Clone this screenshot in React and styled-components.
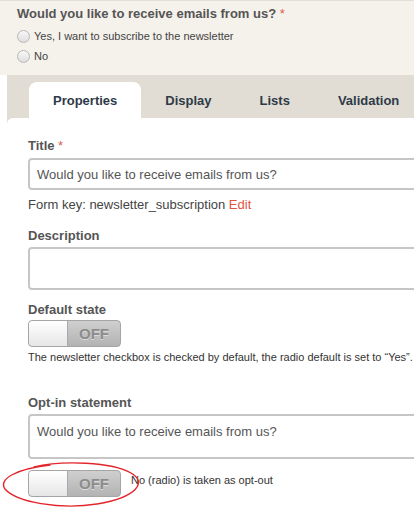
import styled, { createGlobalStyle } from "styled-components";

const GlobalStyle = createGlobalStyle`
  html, body {
    margin: 0;
    padding: 0;
    background: #fff;
    font-family: "Liberation Sans", Arial, sans-serif;
    overflow: hidden;
  }
`;

const tabs = ["Properties", "Display", "Lists", "Validation"];

const App = () => {
  return (
    <Page>
      <GlobalStyle />
      <Preview>
        <PreviewTitle>
          Would you like to receive emails from us? <Req>*</Req>
        </PreviewTitle>
        <RadioRow>
          <Radio />
          Yes, I want to subscribe to the newsletter
        </RadioRow>
        <RadioRow>
          <Radio />
          No
        </RadioRow>
      </Preview>
      <Editor>
        <TabBar>
          {tabs.map((t, i) => (
            <Tab key={t} $active={i === 0}>
              {t}
            </Tab>
          ))}
        </TabBar>
        <Panel>
          <Label>
            Title <Req>*</Req>
          </Label>
          <TextInput>Would you like to receive emails from us?</TextInput>
          <FormKey>
            Form key: newsletter_subscription <EditLink>Edit</EditLink>
          </FormKey>

          <Label $gap={15}>Description</Label>
          <TextArea $h={43} />

          <Label $gap={12}>Default state</Label>
          <Toggle $gap={2}>
            <Knob />
            <ToggleText>OFF</ToggleText>
          </Toggle>
          <Help>
            The newsletter checkbox is checked by default, the radio default is
            set to “Yes”.
          </Help>

          <Label $gap={31}>Opt-in statement</Label>
          <TextArea $h={45}>Would you like to receive emails from us?</TextArea>
          <ToggleRow>
            <Toggle>
              <Knob />
              <ToggleText>OFF</ToggleText>
            </Toggle>
            <HelpInline>No (radio) is taken as opt-out</HelpInline>
            <Circle width="146" height="50" viewBox="0 0 146 50">
              <path
                d="M 34 6 C 62 -1, 112 1, 131 12 C 147 21, 138 36, 97 43 C 60 49, 16 41, 5 28 C -2 18, 16 8, 50 4"
                fill="none"
                stroke="#e3262b"
                strokeWidth="1.4"
                strokeLinecap="round"
              />
            </Circle>
          </ToggleRow>
        </Panel>
      </Editor>
    </Page>
  );
};
export default App;

const Page = styled.div`
  width: 414px;
  height: 512px;
  overflow: hidden;
  color: #555;
`;
const Preview = styled.div`
  height: 75px;
  box-sizing: border-box;
  background: #f5f1eb;
  border-top: 1px solid #e4dfd7;
  padding: 5px 17px 0;
`;
const PreviewTitle = styled.div`
  font-size: 13px;
  font-weight: bold;
  line-height: 16px;
  color: #555;
  margin-bottom: 4px;
`;
const Req = styled.span`
  color: #e0604f;
  font-weight: normal;
`;
const RadioRow = styled.div`
  display: flex;
  align-items: center;
  gap: 4px;
  font-size: 11px;
  line-height: 20px;
  color: #444;
`;
const Radio = styled.span`
  width: 11px;
  height: 11px;
  border-radius: 50%;
  border: 1px solid #b8b8b8;
  background: linear-gradient(#f8f8f8, #dedede);
`;
const Editor = styled.div`
  margin-left: 7px;
  background: #e1ddd4;
`;
const TabBar = styled.div`
  display: flex;
  padding: 7px 0 0 22px;
  height: 43px;
  box-sizing: border-box;
`;
const Tab = styled.div`
  padding: 0 24px;
  height: 36px;
  display: flex;
  align-items: center;
  font-size: 13px;
  font-weight: bold;
  color: #2f3a48;
  border-radius: 8px 8px 0 0;
  background: ${(p) => (p.$active ? "#fff" : "transparent")};
  white-space: nowrap;
`;
const Panel = styled.div`
  position: relative;
  background: #fff;
  border-top-left-radius: 6px;
  padding: 20px 0 40px 21px;
`;
const Label = styled.div`
  font-size: 13px;
  font-weight: bold;
  line-height: 16px;
  color: #555;
  margin-top: ${(p) => p.$gap || 0}px;
`;
const TextInput = styled.div`
  margin-top: 4px;
  width: 400px;
  height: 32px;
  box-sizing: border-box;
  border: 2px solid #c6c6c6;
  border-radius: 4px;
  padding: 0 7px;
  display: flex;
  align-items: center;
  font-size: 13px;
  color: #555;
`;
const TextArea = styled.div`
  margin-top: 3px;
  width: 400px;
  height: ${(p) => p.$h}px;
  box-sizing: border-box;
  border: 2px solid #c6c6c6;
  border-radius: 4px;
  padding: 8px 7px;
  font-size: 13px;
  line-height: 16px;
  color: #555;
`;
const FormKey = styled.div`
  margin-top: 7px;
  font-size: 13px;
  line-height: 16px;
  color: #444;
`;
const EditLink = styled.span`
  color: #e0533f;
`;
const Toggle = styled.div`
  margin-top: ${(p) => p.$gap || 0}px;
  width: 93px;
  height: 27px;
  box-sizing: border-box;
  border: 1px solid #a5a5a5;
  border-radius: 4px;
  display: flex;
  overflow: hidden;
  background: linear-gradient(#cfcfcf, #b3b3b3);
  flex-shrink: 0;
`;
const Knob = styled.div`
  width: 38px;
  height: 100%;
  background: linear-gradient(#ffffff, #e6e6e6);
  border-right: 1px solid #a9a9a9;
  border-radius: 3px 0 0 3px;
`;
const ToggleText = styled.div`
  flex: 1;
  display: flex;
  align-items: center;
  justify-content: center;
  font-size: 15px;
  font-weight: bold;
  color: #8c8c8c;
  text-shadow: 0 1px 0 #dcdcdc;
`;
const Help = styled.div`
  margin-top: 4px;
  font-size: 11px;
  line-height: 13px;
  color: #333;
  white-space: nowrap;
`;
const ToggleRow = styled.div`
  position: relative;
  margin-top: 11px;
  display: flex;
  align-items: center;
  gap: 10px;
`;
const HelpInline = styled.div`
  font-size: 11px;
  line-height: 13px;
  color: #333;
  margin-top: -6px;
`;
const Circle = styled.svg`
  position: absolute;
  left: -28px;
  top: -9px;
  pointer-events: none;
`;
